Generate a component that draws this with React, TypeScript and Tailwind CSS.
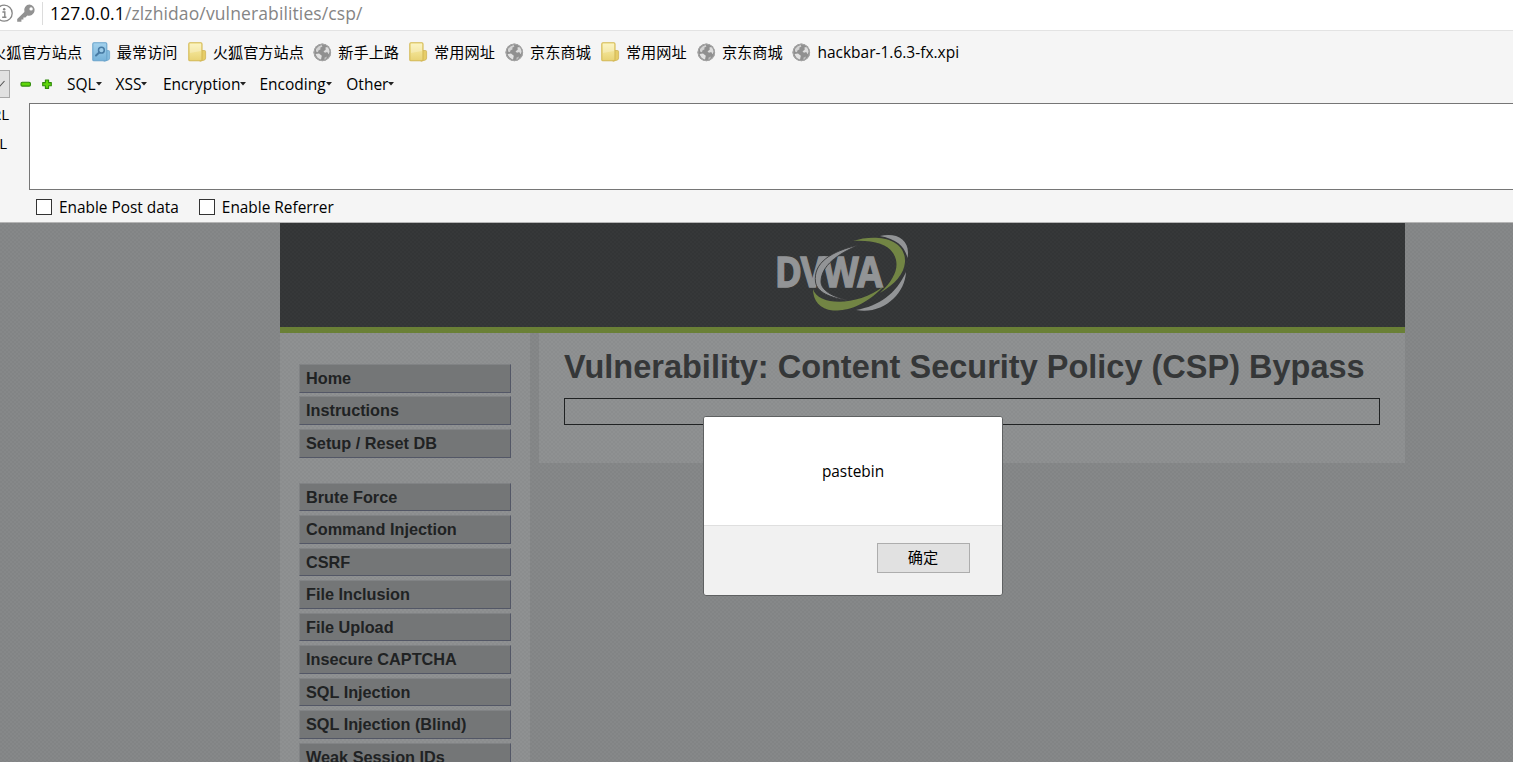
import React from "react";

const UI = "font-['Open_Sans','Noto_Sans_CJK_SC',sans-serif]";

function Folder() {
  return (
    <svg width="19" height="20" viewBox="0 0 19 20" className="shrink-0">
      <defs>
        <linearGradient id="fold" x1="0" y1="0" x2="0" y2="1">
          <stop offset="0" stopColor="#fbf2b0" />
          <stop offset="1" stopColor="#e8d274" />
        </linearGradient>
      </defs>
      <path d="M12 8.500h4.400q1.200 0 1.200 1.200v6.400q0 1.700-1.700 2.100l-4 1z" fill="#e6cd68" stroke="#cfb458" strokeWidth="0.8" />
      <rect x="0.8" y="0.8" width="13.2" height="18" rx="1.1" fill="url(#fold)" stroke="#d4b954" strokeWidth="1.1" />
      <path d="M2 2h11v7L2 11z" fill="#fff" opacity=".25" />
    </svg>
  );
}

function BlueFolder() {
  return (
    <svg width="19" height="20" viewBox="0 0 19 20" className="shrink-0">
      <defs>
        <linearGradient id="blue" x1="0" y1="0" x2="0" y2="1">
          <stop offset="0" stopColor="#a4d2ed" />
          <stop offset="1" stopColor="#76b2d9" />
        </linearGradient>
      </defs>
      <path d="M13 8.500h3.400q1.200 0 1.200 1.200v6.400q0 1.700-1.700 2.100l-4 1z" fill="#85bddf" stroke="#6ea6cd" strokeWidth="0.8" />
      <rect x="0.8" y="0.8" width="14" height="18" rx="1.1" fill="url(#blue)" stroke="#6aa4cc" strokeWidth="1.1" />
      <circle cx="9.400" cy="8.200" r="2.900" fill="#9ccbe8" stroke="#477ba4" strokeWidth="1.5" />
      <path d="M7.200 10.500L4 13.500" stroke="#477ba4" strokeWidth="2" strokeLinecap="round" />
    </svg>
  );
}

function Globe() {
  return (
    <svg width="19" height="19" viewBox="0 0 19 19" className="shrink-0">
      <circle cx="9.300" cy="9.400" r="8.800" fill="#909090" />
      <circle cx="9.300" cy="9.400" r="8.200" fill="none" stroke="#a6a6a6" strokeWidth="1" />
      <path d="M3 6Q5 2.800 8.600 2l.8 1.400-2.200 1.400.4 1.400-2.200 1.200-.4 1.800-2-.6z" fill="#d2d2d2" />
      <path d="M10.500 8.500l2.300-2-.4-2 1.800-.6 1.600 1.900.8 3-1 2.400-1.400-2.200-2.200.8z" fill="#dcdcdc" />
      <path d="M2.600 11l3.400-.4 2.800 2.200-.8 3.600Q4 15.600 2.600 11z" fill="#e2e2e2" />
      <path d="M11.600 14.600l2.600-1-1.400 2.600-1.600.4z" fill="#bdbdbd" />
    </svg>
  );
}

const bookmarks: { icon: "blue" | "folder" | "globe"; label: string; w: string }[] = [
  { icon: "blue", label: "最常访问", w: "w-[96px]" },
  { icon: "folder", label: "火狐官方站点", w: "w-[125.500px]" },
  { icon: "globe", label: "新手上路", w: "w-[95.800px]" },
  { icon: "folder", label: "常用网址", w: "w-[96px]" },
  { icon: "globe", label: "京东商城", w: "w-[95.800px]" },
  { icon: "folder", label: "常用网址", w: "w-[96px]" },
  { icon: "globe", label: "京东商城", w: "w-[95.500px]" },
  { icon: "globe", label: "hackbar-1.6.3-fx.xpi", w: "w-[200px]" },
];

const hackMenus = [
  { label: "SQL", w: "w-[48.500px]" },
  { label: "XSS", w: "w-[47.500px]" },
  { label: "Encryption", w: "w-[96.500px]" },
  { label: "Encoding", w: "w-[86.800px]" },
  { label: "Other", w: "w-[60px]" },
];

const groups = [
  ["Home", "Instructions", "Setup / Reset DB"],
  [
    "Brute Force",
    "Command Injection",
    "CSRF",
    "File Inclusion",
    "File Upload",
    "Insecure CAPTCHA",
    "SQL Injection",
    "SQL Injection (Blind)",
    "Weak Session IDs",
  ],
];

function AddressBar() {
  return (
    <div className="flex h-[31px] shrink-0 items-start border-b border-[#e3e3e3] bg-white">
      <svg width="43" height="27" viewBox="0 0 43 27" className="shrink-0">
        <circle cx="4.2" cy="13.2" r="8" fill="none" stroke="#868686" strokeWidth="1.3" />
        <circle cx="4.2" cy="9.3" r="1.2" fill="#868686" />
        <path d="M2.4 12h2.4v5M2.2 17.2h4.2" fill="none" stroke="#868686" strokeWidth="1.4" />
        <path
          d="M29.6 4.6a5.6 5.6 0 0 0-5.2 7.4L17.2 19v2.8h4.2v-2.2h2v-2.2h2l1.9-1.9a5.6 5.6 0 1 0 2.3-10.9zm1.5 2.6a1.7 1.7 0 1 1 0 3.4 1.7 1.7 0 0 1 0-3.4z"
          fill="#929292"
        />
        <path d="M42.5 2v23" stroke="#dcdcdc" />
      </svg>
      <div className="ml-[7px] whitespace-nowrap text-[17.500px] leading-[27px] tracking-[0.120px] text-[#858585]">
        <span className="text-black">127.0.0.1</span>/zlzhidao/vulnerabilities/csp/
      </div>
    </div>
  );
}

function BookmarkBar() {
  return (
    <div className="flex h-[39px] shrink-0 items-center pt-[4px] text-[15.2px]">
      <div className="flex w-[91.500px] shrink-0 overflow-hidden">
        <span className="-ml-[9px] whitespace-nowrap">火狐官方站点</span>
      </div>
      {bookmarks.map((b, i) => (
        <div key={i} className={`flex shrink-0 items-center gap-[6.300px] ${b.w}`}>
          {b.icon === "blue" ? <BlueFolder /> : b.icon === "folder" ? <Folder /> : <Globe />}
          <span className={b.label.startsWith("hack") ? "whitespace-nowrap text-[15.500px]" : "whitespace-nowrap"}>
            {b.label}
          </span>
        </div>
      ))}
    </div>
  );
}

function HackBar() {
  return (
    <div className="flex h-[33px] shrink-0 items-center pb-[4px]">
      <div className="-mt-[2px] flex h-[28px] w-[10px] shrink-0 items-center border border-l-0 border-[#a8a8a8] bg-[#e1e1e1]">
        <svg width="8" height="10" viewBox="0 0 8 10">
          <path d="M-3 3L0 7 4.5 2" fill="none" stroke="#555" strokeWidth="1.1" />
        </svg>
      </div>
      <svg width="57" height="16" viewBox="0 0 57 16" className="-mt-[2px] shrink-0">
        <rect x="11" y="6.3" width="9.4" height="3.8" rx="1.2" fill="#5fd60a" stroke="#2f8a0a" strokeWidth="1.1" />
        <path
          d="M35.4 4h3.2v2.6h2.7v3.2h-2.7v2.6h-3.2V9.8h-2.7V6.6h2.7z"
          fill="#5fd60a"
          stroke="#2f8a0a"
          strokeWidth="1.1"
          strokeLinejoin="round"
        />
      </svg>
      {hackMenus.map((m) => (
        <div key={m.label} className={`flex shrink-0 items-center ${m.w}`}>
          <span className="whitespace-nowrap text-[15.500px]">{m.label}</span>
          <svg width="6" height="4" viewBox="0 0 6 4" className="-mt-[2px] shrink-0">
            <path d="M0 0h6L3 3.6z" fill="#222" />
          </svg>
        </div>
      ))}
    </div>
  );
}

function HackPanel() {
  return (
    <div className="flex h-[87px] shrink-0">
      <div className="flex w-[29px] shrink-0 flex-col overflow-hidden text-[15px] leading-[29px]">
        <span className="-mt-[3px] -ml-[8px]">RL</span>
        <span className="-ml-[10px]">RL</span>
      </div>
      <div className="grow border border-r-0 border-[#767676] bg-white" />
    </div>
  );
}

function Check({ label }: { label: string }) {
  return (
    <label className="flex items-center gap-[7px]">
      <span className="size-4 border border-[#333] bg-white" />
      <span className="whitespace-nowrap pt-[2px] text-[15.400px] leading-[20px]">{label}</span>
    </label>
  );
}

function Logo() {
  return (
    <svg width="135" height="80" viewBox="0 0 135 80" className="shrink-0">
      <text
        transform="translate(-0.3 55) scale(0.9 1)"
        fontFamily="Open Sans"
        fontWeight="700"
        fontSize="41"
        letterSpacing="-1.6"
        fill="#929496"
        stroke="#929496"
        strokeWidth="1.3"
      >
        DVWA
      </text>
      <path
        d="M84 13C56 19 38 31 40.500 50C42 60 54 66 76 69C57 65 45.500 58 46 49C46.500 34 62 22 84 13z"
        fill="#929496"
        stroke="#353738"
        strokeWidth="0.9"
      />
      <path d="M105 4C121 0 136 7 132.500 26C130 15 122 7 105 4z" fill="#929496" />
      <path d="M131 40C130 62 108 83 81 78C104 74 121 62 131 40z" fill="#929496" />
      <path
        d="M78 9C99 2 131 5 130 30C129 42 120 52 105 61C122 45 125 32 118 21C112 12 98 8 78 9z"
        fill="#728544"
      />
      <path d="M38 57C43 74 82 75 109 54C88 76 70 79 58 78.500C45 77 38 69 38 57z" fill="#728544" />
    </svg>
  );
}

function Page() {
  return (
    <div className="flex h-[539px] shrink-0 justify-center overflow-hidden bg-[#868889] bg-[conic-gradient(#828485_25%,transparent_25%_50%,#828485_50%_75%,transparent_75%)] bg-[size:4px_4px] pr-[108px] pl-[280px] font-['Liberation_Sans',sans-serif]">
      <div className="flex w-[1125px] shrink-0 flex-col">
        <header className="flex h-[110px] shrink-0 justify-center border-b-[6px] border-[#6a8036] bg-[#363839] bg-[conic-gradient(#333536_25%,transparent_25%_50%,#333536_50%_75%,transparent_75%)] bg-[size:4px_4px] pt-[9px]">
          <Logo />
        </header>
        <div className="flex grow gap-[9px]">
          <nav className="flex w-[250px] shrink-0 flex-col gap-[21.300px] bg-[#8f9192] bg-[conic-gradient(#8b8d8e_25%,transparent_25%_50%,#8b8d8e_50%_75%,transparent_75%)] bg-[size:4px_4px] pt-[30.750px] pl-[19px]">
            {groups.map((g, i) => (
              <ul key={i} className="flex flex-col">
                {g.map((t) => (
                  <li
                    key={t}
                    className="mb-[3.750px] h-[28.750px] w-[212px] border border-t-[#818385] border-r-[#535766] border-b-[#535766] border-l-[#818385] bg-[#747677] pl-[6px] text-[16.250px] leading-[26.200px] font-bold whitespace-nowrap text-[#202223]"
                  >
                    {t}
                  </li>
                ))}
              </ul>
            ))}
          </nav>
          <main className="flex h-[130px] w-[866px] flex-col bg-[#8f9192] bg-[conic-gradient(#8b8d8e_25%,transparent_25%_50%,#8b8d8e_50%_75%,transparent_75%)] bg-[size:4px_4px] px-[25px] pt-[14px]">
            <h1 className="text-[32.500px] leading-[40px] font-bold whitespace-nowrap text-[#353738]">
              Vulnerability: Content Security Policy (CSP) Bypass
            </h1>
            <div className="mt-[11px] h-[27px] border border-[#202223]" />
          </main>
        </div>
      </div>
    </div>
  );
}

function AlertDialog() {
  return (
    <div className="absolute top-[416px] left-[703px] flex h-[180px] w-[300px] flex-col overflow-hidden rounded-[3px] border border-[#5f6162] bg-[#f1f1f1]">
      <div className="flex h-[109px] items-center justify-center border-b border-[#dfdfdf] bg-white pt-[2px] text-[15.400px] text-black">
        pastebin
      </div>
      <div className="flex justify-end pt-[17px] pr-[32px]">
        <button className="h-[30px] w-[93px] border border-[#adadad] bg-[#e1e1e1] pr-[1px] pb-[2px] text-[15.2px] leading-[26px] text-black">
          确定
        </button>
      </div>
    </div>
  );
}

export default function App() {
  return (
    <div className={`relative flex h-[762px] w-[1513px] flex-col overflow-hidden bg-[#f5f5f5] text-black ${UI}`}>
      <AddressBar />
      <BookmarkBar />
      <HackBar />
      <HackPanel />
      <div className="flex h-[33px] shrink-0 items-center gap-[20px] border-b border-[#b5b5b5] pt-[2px] pl-[36px]">
        <Check label="Enable Post data" />
        <Check label="Enable Referrer" />
      </div>
      <Page />
      <AlertDialog />
    </div>
  );
}
